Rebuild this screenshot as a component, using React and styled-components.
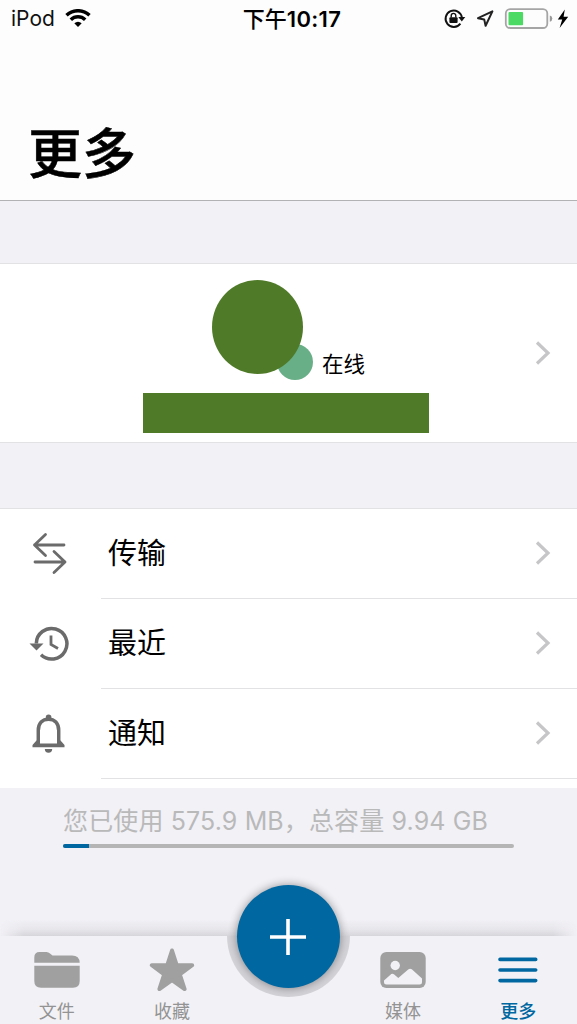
import React, { useState } from "react";
import styled, { createGlobalStyle } from "styled-components";

const GlobalStyle = createGlobalStyle`
    * {
        box-sizing: border-box;
    }
    body {
        margin: 0;
        background: #f2f1f6;
        font-family: Inter, "Noto Sans CJK SC", sans-serif;
        color: #000;
    }
    svg {
        display: block;
    }
`;

const Screen = styled.div`
    width: 577px;
    height: 1024px;
    display: flex;
    flex-direction: column;
    overflow: hidden;
    background: #f2f1f6;
`;

const Header = styled.header`
    height: 201px;
    flex: none;
    display: flex;
    flex-direction: column;
    justify-content: space-between;
    background: #fdfdfd;
    border-bottom: 1px solid #b2b2b4;
`;

const StatusBar = styled.div`
    height: 37px;
    display: grid;
    grid-template-columns: 1fr auto 1fr;
    align-items: center;
    padding: 0 8px 0 11px;
`;

const Carrier = styled.div`
    display: flex;
    align-items: center;
    gap: 10px;
    font-size: 21px;
    line-height: 37px;
    color: #111;
`;

const Clock = styled.div`
    font-size: 22px;
    font-weight: 500;
    line-height: 35px;
    padding-top: 2px;
    margin-left: 4px;
`;

const ClockDigits = styled.span`
    font-size: 22px;
    font-weight: 600;
    letter-spacing: 0.3px;
`;

const StatusIcons = styled.div`
    display: flex;
    align-items: center;
    justify-content: flex-end;
`;

const Title = styled.h1`
    margin: 0;
    padding: 0 0 11px 28px;
    font-size: 54px;
    line-height: 68px;
    font-weight: 500;
    -webkit-text-stroke: 0.5px #000;
`;

const Profile = styled.section`
    height: 180px;
    flex: none;
    margin-top: 62px;
    padding: 16px 26px 9px 143px;
    display: flex;
    align-items: center;
    justify-content: space-between;
    background: #fff;
    border-top: 1px solid #e2e2e5;
    border-bottom: 1px solid #e2e2e5;
`;

const ProfileInfo = styled.div`
    width: 286px;
    height: 153px;
    display: flex;
    flex-direction: column;
    justify-content: space-between;
`;

const ProfileArrow = styled.div`
    padding-bottom: 8px;
`;

const AvatarRow = styled.div`
    display: flex;
    align-items: flex-start;
    padding-left: 69px;
`;

const Avatar = styled.div`
    position: relative;
    width: 91px;
    height: 94px;
    &::before {
        content: "";
        position: absolute;
        right: -10px;
        bottom: -6px;
        width: 36px;
        height: 36px;
        border-radius: 50%;
        background: #68af87;
    }
    &::after {
        content: "";
        position: absolute;
        inset: 0;
        border-radius: 50%;
        background: #4f7a28;
    }
`;

const Status = styled.span`
    margin: 68px 0 0 19px;
    font-size: 21.5px;
    line-height: 32px;
`;

const NameBlock = styled.div`
    height: 40px;
    background: #4f7a28;
`;

const Menu = styled.ul`
    height: 280px;
    flex: none;
    list-style: none;
    margin: 65px 0 0;
    padding: 0;
    background: #fff;
    border-top: 1px solid #e2e2e5;
`;

const MenuItem = styled.li`
    height: 90px;
    display: flex;
    align-items: stretch;
    cursor: pointer;
`;

const MenuIcon = styled.div`
    width: 101px;
    padding: 0 0 2px 28px;
    display: flex;
    align-items: center;
`;

const MenuLabel = styled.div`
    flex: 1;
    display: flex;
    align-items: center;
    justify-content: space-between;
    padding: 0 26px 2px 7px;
    border-bottom: 1px solid #e2e2e4;
    font-size: 29px;
`;

const MenuText = styled.span`
    padding-bottom: 3px;
`;

const Storage = styled.div`
    flex: 1;
    padding: 15px 63px 0;
`;

const StorageText = styled.div`
    font-size: 25px;
    line-height: 36px;
    color: #b9b9ba;
    white-space: nowrap;
    letter-spacing: 0.13px;
`;

const Track = styled.div`
    height: 4px;
    margin-top: 5px;
    border-radius: 2px;
    background: #b5b5b6;
    overflow: hidden;
`;

const Used = styled.div`
    height: 100%;
    background: #0067a0;
`;

const TabBar = styled.nav`
    position: relative;
    height: 88px;
    flex: none;
    display: grid;
    grid-template-columns: repeat(5, 1fr);
    background: #f2f1f6;
    &::before {
        content: "";
        position: absolute;
        left: 0;
        right: 0;
        top: -16px;
        height: 16px;
        background: linear-gradient(to top, #d6d5da, rgba(226, 225, 230, 0.75) 40%, transparent);
        mask-image: linear-gradient(to right, transparent, #000 24px, #000 553px, transparent);
    }
`;

const Tab = styled.button`
    border: 0;
    background: none;
    padding: 12px 2px 0 0;
    display: flex;
    flex-direction: column;
    align-items: center;
    gap: 7px;
    font-family: inherit;
    font-size: 18px;
    line-height: 26px;
    font-weight: ${({ $active }) => ($active ? 500 : 400)};
    color: ${({ $active }) => ($active ? "#0067a0" : "#939393")};
`;

const AddSlot = styled.div`
    position: relative;
    display: flex;
    justify-content: center;
`;

// half circle cut into the tab bar under the add button
const Notch = styled.div`
    position: absolute;
    top: 0;
    width: 123px;
    height: 61px;
    border-radius: 0 0 62px 62px;
    background: #d4d3d8;
`;

const AddButton = styled.button`
    position: absolute;
    top: -51px;
    width: 103px;
    height: 103px;
    padding: 0;
    border: 0;
    border-radius: 50%;
    display: flex;
    align-items: center;
    justify-content: center;
    background: #0067a0;
    box-shadow: 0 0 10px rgba(0, 0, 0, 0.4);
    clip-path: circle(61px at 51.5px 51px);
`;

const Chevron = () => (
    <svg width="16" height="24" viewBox="0 0 16 24" fill="none" stroke="#c6c6c9" strokeWidth="3.2">
        <path d="M2 1.5 13 12 2 22.5" />
    </svg>
);

const TransferIcon = () => (
    <svg width="42" height="44" viewBox="0 0 42 44" fill="none" stroke="#6b6b6b" strokeWidth="2.8" strokeLinecap="round" strokeLinejoin="round">
        <path d="M17.5 3.5 6.5 14 17.5 24.5M6.5 14H36M26 20.5 37 31 26 41.5M37 31H7" />
    </svg>
);

const HistoryIcon = () => (
    <svg width="42" height="42" viewBox="0 0 42 42" fill="none" stroke="#6b6b6b" strokeWidth="3.5">
        <path d="M8.3 21.5A15.3 15.3 0 1 1 13 32.8" />
        <path d="M1.5 21.5H15.5L8.5 28.5Z" fill="#6b6b6b" stroke="none" />
        <path d="M23 13.5V22.5L30 26.5" strokeWidth="2.8" />
    </svg>
);

const BellIcon = () => (
    <svg width="42" height="42" viewBox="0 0 42 42" fill="none" stroke="#6b6b6b" strokeWidth="3.5">
        <path d="M10.3 33V18.5C10.3 11 14.5 7.2 20.5 7.2S30.7 11 30.7 18.5V33" />
        <path d="M17.8 7V5.3a2.8 2.8 0 0 1 5.6 0V7zM8.5 28.5 4.5 33V35.3H36.5V33L32.5 28.5ZM16.8 37H24.2a3.7 3.7 0 0 1-7.4 0z" fill="#6b6b6b" stroke="none" />
        <path d="M12 18V31.5H29V18Z" fill="#fff" stroke="none" />
    </svg>
);

const FolderIcon = () => (
    <svg width="48" height="44" viewBox="0 0 48 44" fill="#a0a0a0">
        <path d="M1.3 14.8V9.5Q1.3 4 6.5 4H13.5Q15.5 4 17 5.5L19.5 7.5H39Q46.5 7.5 46.7 14.8Z" />
        <path d="M1.3 17.8H46.7V33Q46.7 39.8 40 39.8H8Q1.3 39.8 1.3 33Z" />
    </svg>
);

const StarIcon = () => (
    <svg width="48" height="44" viewBox="0 0 48 44" fill="#a0a0a0" stroke="#a0a0a0" strokeWidth="4" strokeLinejoin="round">
        <path d="M24 2.5 28.7 17.2H44.2L31.8 26.3 36.6 41 24 32 11.4 41 16.2 26.3 3.8 17.2H19.3Z" />
    </svg>
);

const MediaIcon = () => (
    <svg width="48" height="44" viewBox="0 0 48 44">
        <rect x="1.3" y="4" width="45.4" height="36" rx="6" fill="#a0a0a0" />
        <circle cx="16.2" cy="17.5" r="4.7" fill="#f2f1f6" />
        <path d="M5 32.5 12.3 26Q13.8 25.2 15.2 26.4L19.3 30 29.2 21.4Q31 20 32.8 21.3L43 30.5V34Q43 36.5 40.5 36.5H7.5Q5 36.5 5 34Z" fill="#f2f1f6" />
    </svg>
);

const MoreIcon = () => (
    <svg width="48" height="44" viewBox="0 0 48 44" stroke="#0067a0" strokeWidth="3.6" strokeLinecap="round">
        <path d="M6 11.4H41.7M6 22H41.7M6 32.6H41.7" />
    </svg>
);

const WifiIcon = () => (
    <svg width="26" height="19" viewBox="0 0 26 19" fill="none" stroke="#000" strokeWidth="3.5">
        <path d="M1.5 6.2A17 17 0 0 1 24.5 6.2" />
        <path d="M5.8 10.7A10.4 10.4 0 0 1 20.2 10.7" />
        <path d="M9.3 14.2Q13 11.2 16.7 14.2L13 18Z" fill="#000" stroke="none" />
    </svg>
);

const StatusGlyphs = () => (
    <svg width="126" height="24" viewBox="0 0 126 24">
        {/* rotation lock */}
        <path d="M17.4 16.6A8.2 8.2 0 1 1 18.9 10.5" fill="none" stroke="#111" strokeWidth="1.9" />
        <path d="M15.3 10H22.3L18.8 14.6Z" fill="#111" />
        <rect x="6.4" y="10.2" width="8.2" height="5.8" rx="1" fill="#111" />
        <path d="M8.2 10.5V8.7a2.3 2.3 0 0 1 4.6 0V10.5" fill="none" stroke="#111" strokeWidth="1.4" />
        {/* location */}
        <path d="M35 11.2 49.4 4.4 42.6 18.8 41.2 12.4Z" fill="none" stroke="#222" strokeWidth="2" strokeLinejoin="round" />
        {/* battery */}
        <rect x="62.8" y="2.2" width="41.5" height="18.8" rx="4.3" fill="none" stroke="#a5a5a5" strokeWidth="1.8" />
        <path d="M106.8 8.5Q109.3 9 109.3 11.6T106.8 14.7Z" fill="#999" />
        <rect x="65.5" y="5" width="14.6" height="13.3" rx="1" fill="#4cd964" />
        <path d="M121.8 2.5 114.8 12.5H119.2L116.6 21 125.2 9.8H120.6Z" fill="#000" />
    </svg>
);

const menuItems = [
    { label: "传输", icon: <TransferIcon /> },
    { label: "最近", icon: <HistoryIcon /> },
    { label: "通知", icon: <BellIcon /> },
];

const tabs = [
    { label: "文件", icon: <FolderIcon /> },
    { label: "收藏", icon: <StarIcon /> },
    null,
    { label: "媒体", icon: <MediaIcon /> },
    { label: "更多", icon: <MoreIcon /> },
];

function App() {
    const [selectedTab, setSelectedTab] = useState("更多");
    const usedPercent = (575.9 / (9.94 * 1024)) * 100;

    return (
        <Screen>
            <GlobalStyle />
            <Header>
                <StatusBar>
                    <Carrier>
                        iPod
                        <WifiIcon />
                    </Carrier>
                    <Clock>
                        下午<ClockDigits>10:17</ClockDigits>
                    </Clock>
                    <StatusIcons>
                        <StatusGlyphs />
                    </StatusIcons>
                </StatusBar>
                <Title>更多</Title>
            </Header>

            <Profile>
                <ProfileInfo>
                    <AvatarRow>
                        <Avatar />
                        <Status>在线</Status>
                    </AvatarRow>
                    <NameBlock />
                </ProfileInfo>
                <ProfileArrow>
                    <Chevron />
                </ProfileArrow>
            </Profile>

            <Menu>
                {menuItems.map((item) => (
                    <MenuItem key={item.label}>
                        <MenuIcon>{item.icon}</MenuIcon>
                        <MenuLabel>
                            <MenuText>{item.label}</MenuText>
                            <Chevron />
                        </MenuLabel>
                    </MenuItem>
                ))}
            </Menu>

            <Storage>
                <StorageText>您已使用 575.9 MB，总容量 9.94 GB</StorageText>
                <Track>
                    <Used style={{ width: `${usedPercent}%` }} />
                </Track>
            </Storage>

            <TabBar>
                {tabs.map((tab) =>
                    tab ? (
                        <Tab
                            key={tab.label}
                            $active={tab.label === selectedTab}
                            onClick={() => setSelectedTab(tab.label)}
                        >
                            {tab.icon}
                            {tab.label}
                        </Tab>
                    ) : (
                        <AddSlot key="add">
                            <Notch />
                            <AddButton>
                                <svg width="38" height="38" viewBox="0 0 38 38" stroke="#fff" strokeWidth="3.6">
                                    <path d="M19 1V37M1 19H37" />
                                </svg>
                            </AddButton>
                        </AddSlot>
                    )
                )}
            </TabBar>
        </Screen>
    );
}

export default App;
